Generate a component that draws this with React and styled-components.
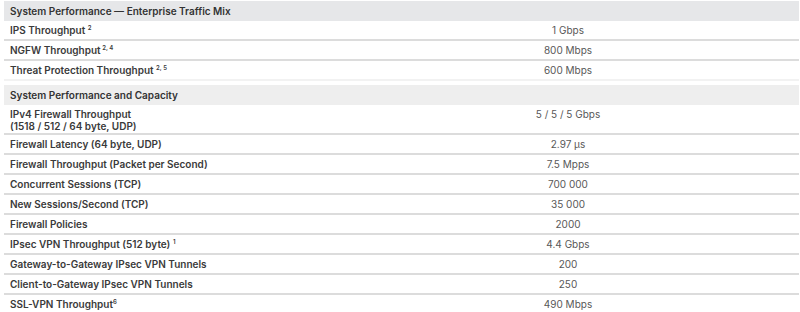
import React from 'react'
import styled, { createGlobalStyle } from 'styled-components';

const GlobalStyle = createGlobalStyle`
  body {
    margin: 0;
    background: #ffffff;
    font-family: Inter, "Noto Sans", "Liberation Sans", sans-serif;
  }
`;

const sections = [
  {
    title: 'System Performance — Enterprise Traffic Mix',
    tone: 'dark',
    rows: [
      { label: 'IPS Throughput ', note: '2', value: '1 Gbps' },
      { label: 'NGFW Throughput', note: ' 2, 4', value: '800 Mbps' },
      { label: 'Threat Protection Throughput ', note: '2, 5', value: '600 Mbps' },
    ],
  },
  {
    title: 'System Performance and Capacity',
    tone: 'light',
    rows: [
      { label: ['IPv4 Firewall Throughput', '(1518 / 512 / 64 byte, UDP)'], value: '5 / 5 / 5 Gbps' },
      { label: 'Firewall Latency (64 byte, UDP)', value: '2.97 μs' },
      { label: 'Firewall Throughput (Packet per Second)', value: '7.5 Mpps' },
      { label: 'Concurrent Sessions (TCP)', value: '700 000' },
      { label: 'New Sessions/Second (TCP)', value: '35 000' },
      { label: 'Firewall Policies', value: '2000' },
      { label: 'IPsec VPN Throughput (512 byte) ', note: '1', value: '4.4 Gbps' },
      { label: 'Gateway-to-Gateway IPsec VPN Tunnels', value: '200' },
      { label: 'Client-to-Gateway IPsec VPN Tunnels', value: '250' },
      { label: 'SSL-VPN Throughput', note: '6', value: '490 Mbps' },
    ],
  },
];

export default function App() {
  return (
    <Page>
      <GlobalStyle />
      {sections.map((s) => (
        <Table key={s.title}>
          <colgroup>
            <col style={{ width: 333 }} />
            <col />
          </colgroup>
          <thead>
            <tr>
              <HeadCell colSpan={2} $tone={s.tone}>{s.title}</HeadCell>
            </tr>
          </thead>
          <tbody>
            {s.rows.map((r, i) => {
              const multi = Array.isArray(r.label);
              return (
                <Row key={i} $multi={multi}>
                  <Label>
                    {multi ? r.label.map((l, j) => <div key={j}>{l}</div>) : r.label}
                    {r.note && <Note>{r.note}</Note>}
                  </Label>
                  <Value>{r.value}</Value>
                </Row>
              );
            })}
          </tbody>
        </Table>
      ))}
    </Page>
  )
}

const Page = styled.div`
  padding: 1px 1px 0 4px;
  display: flex;
  flex-direction: column;
  gap: 4px;
`;

const Table = styled.table`
  width: 795px;
  border-collapse: collapse;
  table-layout: fixed;
  font-size: 10px;
  line-height: 12px;
`;

const HeadCell = styled.th`
  text-align: left;
  padding: 4px 6px;
  font-weight: 600;
  color: #333333;
  background: ${(p) => (p.$tone === 'dark' ? '#e6e7e9' : '#eeeeee')};
`;

const Row = styled.tr`
  td {
    border-bottom: 2px solid #dcdcdc;
    padding-bottom: ${(p) => (p.$multi ? '1px' : '3px')};
  }
  &:last-child td {
    border-bottom-color: #f2f2f2;
  }
`;

const Label = styled.td`
  padding: 3px 6px;
  font-weight: 600;
  color: #3a3a3a;
  vertical-align: top;
`;

const Value = styled.td`
  padding: 3px 6px;
  text-align: center;
  color: #585858;
  vertical-align: top;
`;

const Note = styled.sup`
  font-size: 6px;
  line-height: 0;
  vertical-align: 4px;
`;
